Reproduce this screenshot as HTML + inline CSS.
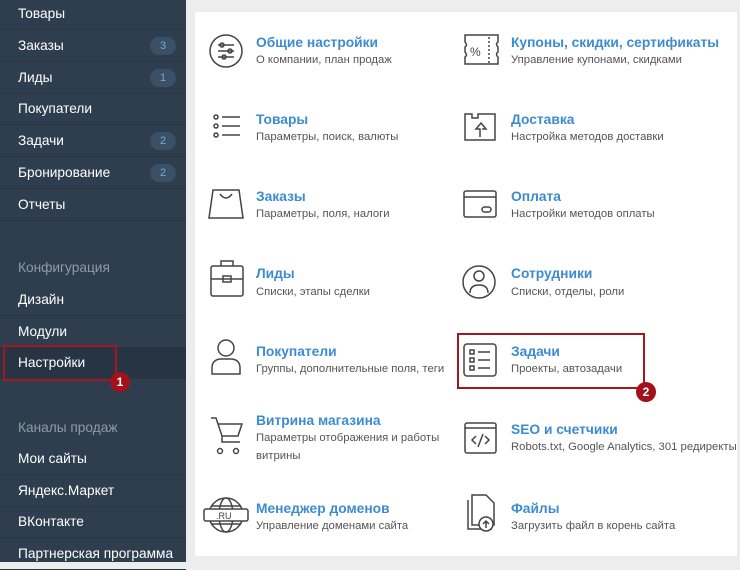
<!DOCTYPE html>
<html><head><meta charset="utf-8"><style>
*{margin:0;padding:0;box-sizing:border-box}
body{width:740px;height:562px;overflow:hidden;background:#ededed;font-family:"Liberation Sans","Noto Sans CJK SC",sans-serif;position:relative}
#sb{position:absolute;left:0;top:0;width:186px;height:562px;background:#2f3e4e}
.r{position:absolute;left:0;width:186px;height:32px;color:#fff;font-size:13.7px;padding-left:18px;line-height:32px;border-bottom:1px solid #2a3846}
.h{color:#8f9aa5;border:none}
.b{position:absolute;right:10px;top:7px;width:26px;height:18px;border-radius:9px;background:#3a5066;color:#6fa9da;font-size:11px;text-align:center;line-height:18px}
#main{position:absolute;left:195px;top:12px;width:542px;height:544px;background:#fff}
.t{position:absolute;color:#3d8bd1;font-weight:bold;font-size:13.8px;white-space:nowrap}
.s{position:absolute;color:#555;font-size:11.3px;white-space:nowrap;line-height:18px}
.box{position:absolute;border:2px solid #a3181e}
.n{position:absolute;width:20px;height:20px;border-radius:50%;background:#a3121a;color:#fff;font-weight:bold;font-size:12px;text-align:center;line-height:20px}
</style></head><body>
<div id="sb">
<div class="r" style="top:-2px">Товары</div>
<div class="r" style="top:30px">Заказы<span class="b">3</span></div>
<div class="r" style="top:62px">Лиды<span class="b">1</span></div>
<div class="r" style="top:93px">Покупатели</div>
<div class="r" style="top:125px">Задачи<span class="b">2</span></div>
<div class="r" style="top:157px">Бронирование<span class="b">2</span></div>
<div class="r" style="top:189px">Отчеты</div>
<div class="r h" style="top:252px">Конфигурация</div>
<div class="r" style="top:284px">Дизайн</div>
<div class="r" style="top:316px">Модули</div>
<div class="r" style="top:347px;background:#273444">Настройки</div>
<div class="r h" style="top:412px">Каналы продаж</div>
<div class="r" style="top:443px">Мои сайты</div>
<div class="r" style="top:475px">Яндекс.Маркет</div>
<div class="r" style="top:506px">ВКонтакте</div>
<div class="r" style="top:538px">Партнерская программа</div>
</div>
<div class="box" style="left:3px;top:345px;width:114px;height:36px"></div>
<div class="n" style="left:110px;top:372px">1</div>
<div id="main"></div>

<svg style="position:absolute;left:0;top:0" width="740" height="562" fill="none" stroke="#444" stroke-width="1.5">
<circle cx="226" cy="51" r="16"/><path d="M218 45h16M218 51h16M218 57h16"/><circle cx="222" cy="45" r="2"/><circle cx="230" cy="51" r="2"/><circle cx="224" cy="57" r="2"/>
<circle cx="216" cy="117" r="2"/><circle cx="216" cy="126" r="2"/><circle cx="216" cy="135" r="2"/><path d="M222 117h18M222 126h18M222 135h18"/>
<path d="M213 190h26l4 28h-34z"/><path d="M220 194q6 8 12 0"/>
<rect x="211" y="266" width="32" height="30" rx="2"/><path d="M221 266v-5h12v5M211 279h32"/><rect x="223" y="276" width="8" height="6"/>
<circle cx="226" cy="348" r="8"/><path d="M212 374v-6q0-8 8-9h12q8 1 8 9v6z"/>
<path d="M211 418h5l6 18h16l4-12h-24M222 436v6h18"/><circle cx="220" cy="451" r="2.5"/><circle cx="236" cy="451" r="2.5"/>
<circle cx="226" cy="515" r="17"/><ellipse cx="226" cy="515" rx="7" ry="17"/><path d="M211 506h30M211 524h30"/><rect x="204" y="509" width="44" height="12" rx="2" fill="#fff"/><text x="216" y="519" font-size="9" fill="#444" stroke="none" font-family="Liberation Sans">.RU</text>
<path d="M465 35h33v7q-3 2 0 5v5q-3 2 0 5v7h-33v-7q3-2 0-5v-5q3-2 0-5z"/><path d="M489 37v28" stroke-dasharray="2 2"/><text x="470" y="56" font-size="12" fill="#444" stroke="none" font-family="Liberation Sans">%</text>
<path d="M465 114h7v4h6v-4h17v26h-30z"/><path d="M480 137v-8h-4l5-6 5 6h-4"/>
<rect x="464" y="191" width="32" height="26" rx="2"/><path d="M464 197h32"/><rect x="482" y="207" width="9" height="5" rx="2.5"/>
<circle cx="479" cy="282" r="16"/><circle cx="479" cy="276" r="5"/><path d="M470 293q0-8 9-8t9 8"/>
<rect x="464" y="344" width="32" height="32" rx="3"/><rect x="470" y="350" width="4" height="4"/><rect x="470" y="358" width="4" height="4"/><rect x="470" y="366" width="4" height="4"/><path d="M478 352h12M478 360h12M478 368h12"/>
<rect x="465" y="423" width="31" height="30" rx="2"/><path d="M465 428h31M476 436l-4 4 4 4M485 436l4 4-4 4M483 434l-5 13"/>
<path d="M468 500v29h24M472 495h14l8 8v22h-22z"/><circle cx="486" cy="524" r="7" fill="#fff"/><path d="M486 528v-7M483 524l3-3 3 3"/>
</svg>

<div class="t" style="left:256px;top:35px">Общие настройки</div><div class="s" style="left:256px;top:51px">О компании, план продаж</div>
<div class="t" style="left:256px;top:112px">Товары</div><div class="s" style="left:256px;top:128px">Параметры, поиск, валюты</div>
<div class="t" style="left:256px;top:189px">Заказы</div><div class="s" style="left:256px;top:205px">Параметры, поля, налоги</div>
<div class="t" style="left:256px;top:266px">Лиды</div><div class="s" style="left:256px;top:283px">Списки, этапы сделки</div>
<div class="t" style="left:256px;top:344px">Покупатели</div><div class="s" style="left:256px;top:360px">Группы, дополнительные поля, теги</div>
<div class="t" style="left:256px;top:413px">Витрина магазина</div><div class="s" style="left:256px;top:429px">Параметры отображения и работы<br>витрины</div>
<div class="t" style="left:256px;top:501px">Менеджер доменов</div><div class="s" style="left:256px;top:517px">Управление доменами сайта</div>

<div class="t" style="left:511px;top:35px">Купоны, скидки, сертификаты</div><div class="s" style="left:511px;top:51px">Управление купонами, скидками</div>
<div class="t" style="left:511px;top:112px">Доставка</div><div class="s" style="left:511px;top:128px">Настройка методов доставки</div>
<div class="t" style="left:511px;top:189px">Оплата</div><div class="s" style="left:511px;top:205px">Настройки методов оплаты</div>
<div class="t" style="left:511px;top:266px">Сотрудники</div><div class="s" style="left:511px;top:283px">Списки, отделы, роли</div>
<div class="t" style="left:511px;top:344px">Задачи</div><div class="s" style="left:511px;top:360px">Проекты, автозадачи</div>
<div class="t" style="left:511px;top:422px">SEO и счетчики</div><div class="s" style="left:511px;top:438px">Robots.txt, Google Analytics, 301 редиректы</div>
<div class="t" style="left:511px;top:501px">Файлы</div><div class="s" style="left:511px;top:517px">Загрузить файл в корень сайта</div>

<div class="box" style="left:457px;top:333px;width:188px;height:56px"></div>
<div class="n" style="left:636px;top:382px">2</div>
</body></html>
